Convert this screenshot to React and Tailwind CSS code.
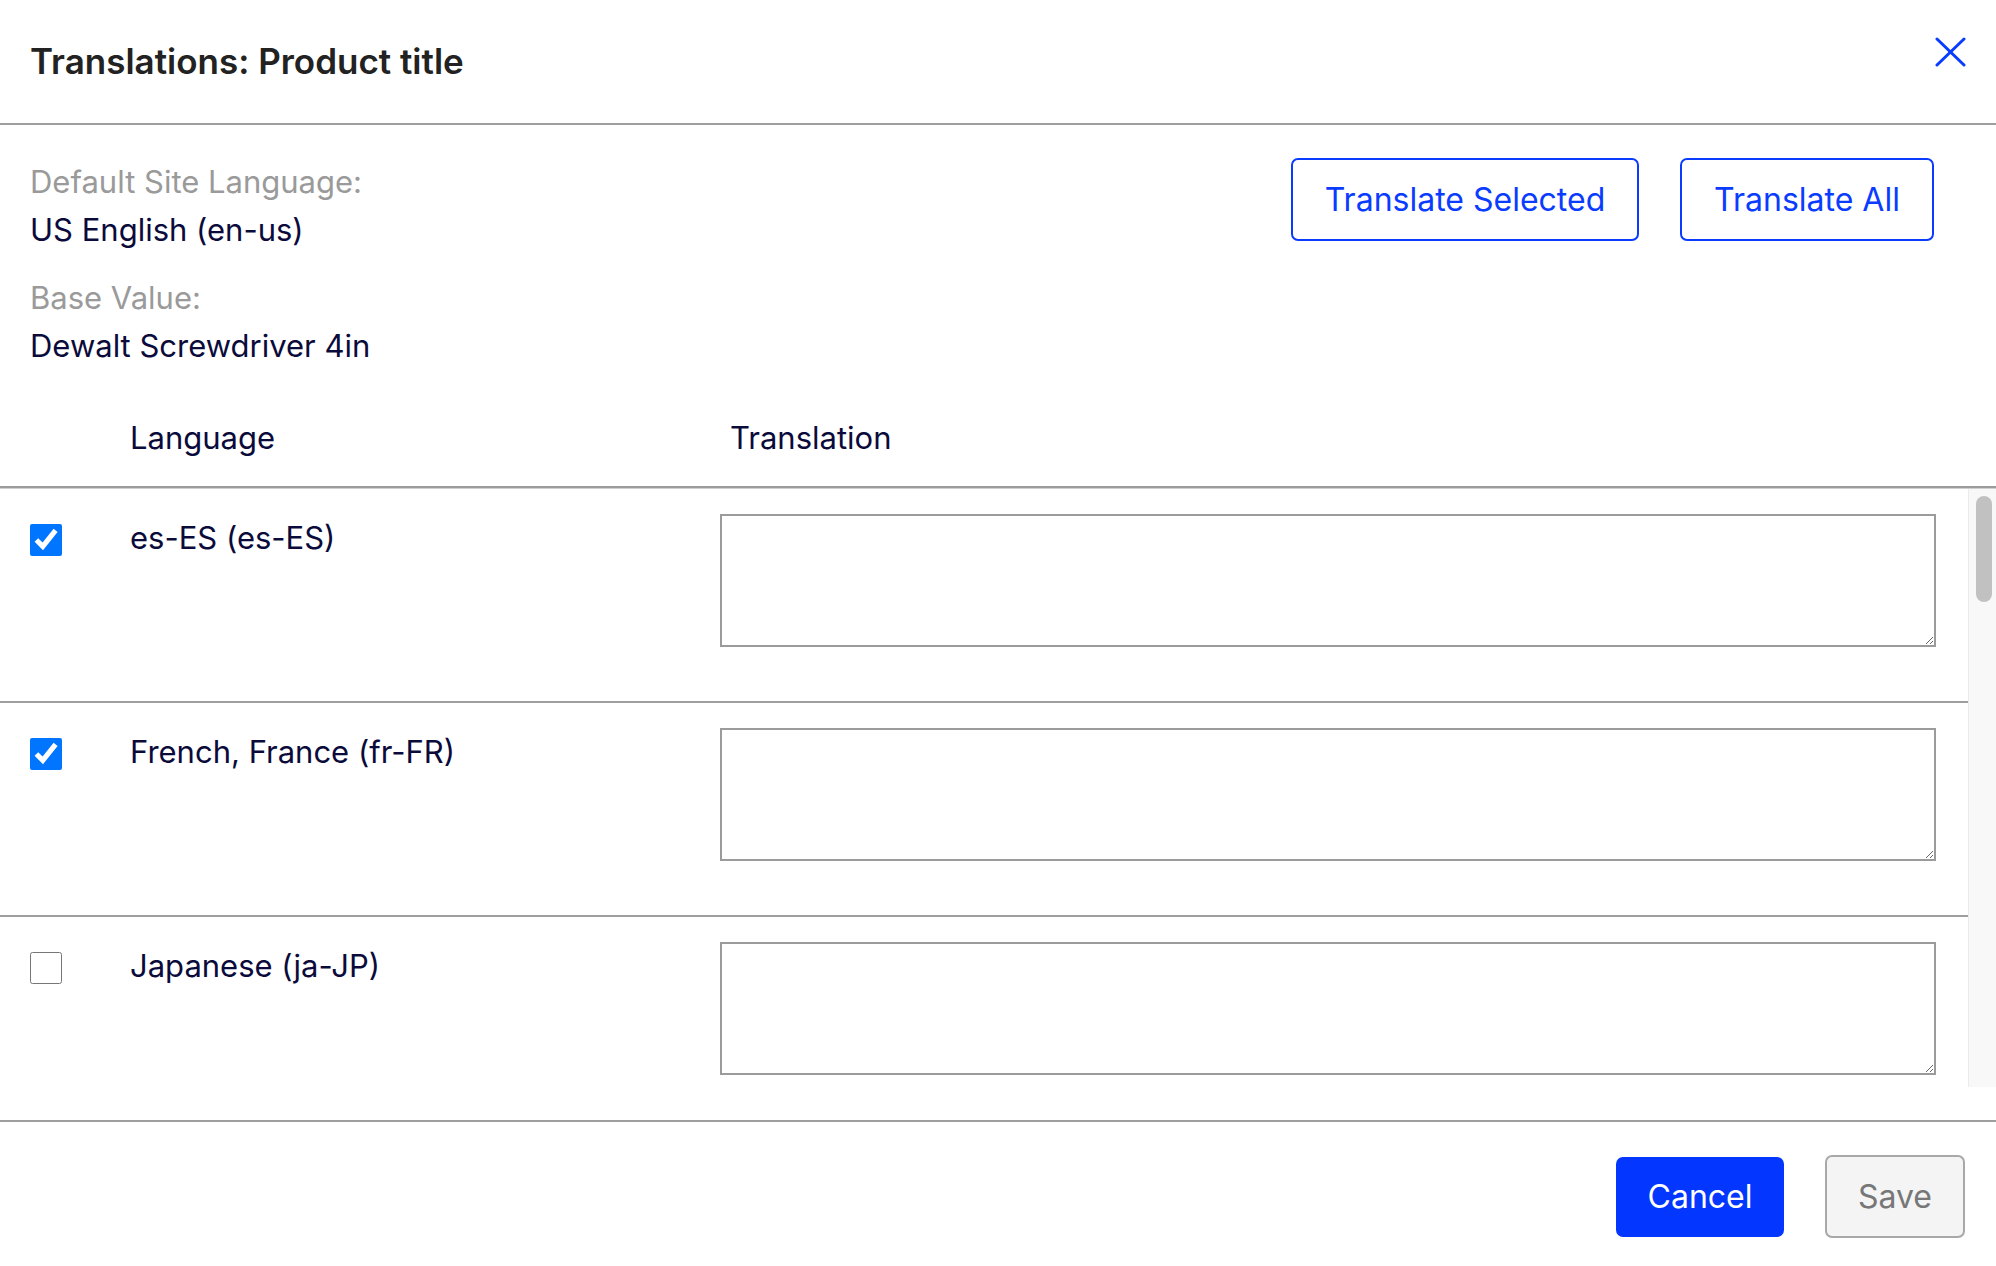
import React from "react";

const rows = [
  { label: "es-ES (es-ES)", checked: true },
  { label: "French, France (fr-FR)", checked: true },
  { label: "Japanese (ja-JP)", checked: false },
];

export default function App() {
  return (
    <div
      className="w-full h-[1266px] bg-white flex flex-col overflow-hidden"
      style={{ fontFamily: "Inter, 'Noto Sans', sans-serif" }}
    >
      {/* Header */}
      <div className="h-[123px] flex items-center justify-between pl-[30px] pr-[30px] shrink-0">
        <h1 className="text-[35px] font-semibold text-[#222222] leading-none">
          Translations: Product title
        </h1>
        <svg
          width="31"
          height="30"
          viewBox="0 0 31 30"
          className="mb-[20px]"
          fill="none"
          stroke="#0a3cff"
          strokeWidth="3"
          strokeLinecap="round"
        >
          <line x1="2" y1="2" x2="29" y2="28" />
          <line x1="29" y1="2" x2="2" y2="28" />
        </svg>
      </div>
      <div className="h-[2px] bg-[#9e9e9e] shrink-0" />

      {/* Info */}
      <div className="flex justify-between items-start pl-[30px] pr-[62px] pt-[33px] shrink-0">
        <div className="flex flex-col text-[31px] leading-[48px]">
          <div className="text-[#9a9a9a]">Default Site Language:</div>
          <div className="text-[#0b0b3b]">US English (en-us)</div>
          <div className="text-[#9a9a9a] mt-[20px]">Base Value:</div>
          <div className="text-[#0b0b3b]">Dewalt Screwdriver 4in</div>
        </div>
        <div className="flex gap-[41px]">
          <button className="w-[348px] h-[83px] border-2 border-[#0a3cff] rounded-[7px] text-[#0a3cff] text-[32px] bg-white">
            Translate Selected
          </button>
          <button className="w-[254px] h-[83px] border-2 border-[#0a3cff] rounded-[7px] text-[#0a3cff] text-[32px] bg-white">
            Translate All
          </button>
        </div>
      </div>

      {/* Table header */}
      <div className="flex pt-[44px] pb-[24px] text-[31px] leading-[48px] text-[#0b0b3b] shrink-0">
        <div className="w-[720px] pl-[130px]">Language</div>
        <div className="pl-[10px]">Translation</div>
      </div>
      <div className="h-[2px] bg-[#9c9c9c] shrink-0" />
      <div className="h-px bg-[#cfcfcf] shrink-0" />

      {/* Scroll area */}
      <div className="h-[598px] flex shrink-0">
        <div className="flex-1 overflow-hidden flex flex-col">
          {rows.map((r) => (
            <div
              key={r.label}
              className="flex items-start pt-[25px] pb-[54px] border-b-2 border-[#9e9e9e] shrink-0"
            >
              <div className="w-[130px] pl-[30px] shrink-0">
                <input
                  type="checkbox"
                  defaultChecked={r.checked}
                  className="w-[32px] h-[32px] mt-[10px] m-0 block accent-[#0075ff]"
                />
              </div>
              <div className="w-[590px] shrink-0 text-[31px] leading-[48px] text-[#0b0b3b]">
                {r.label}
              </div>
              <div className="flex-1 pr-[32px]">
                <textarea className="block w-full h-[133px] border-2 border-[#9b9b9b] bg-white outline-none" />
              </div>
            </div>
          ))}
        </div>
        {/* scrollbar */}
        <div className="w-[28px] shrink-0 bg-[#f8f8f8] border-l border-[#ebebeb] pt-[7px] pl-[7px]">
          <div className="w-[16px] h-[106px] rounded-full bg-[#c1c1c1]" />
        </div>
      </div>

      <div className="h-[33px] shrink-0" />

      {/* Footer */}
      <div className="border-t-2 border-[#9e9e9e] flex-1 flex items-center justify-end pr-[31px] pt-[5px] gap-[41px]">
        <button className="w-[168px] h-[80px] rounded-[7px] bg-[#0336ff] text-white text-[32px]">
          Cancel
        </button>
        <button className="w-[140px] h-[83px] rounded-[7px] bg-[#f4f4f4] border-2 border-[#a8a8a8] text-[#777777] text-[32px]">
          Save
        </button>
      </div>
    </div>
  );
}
